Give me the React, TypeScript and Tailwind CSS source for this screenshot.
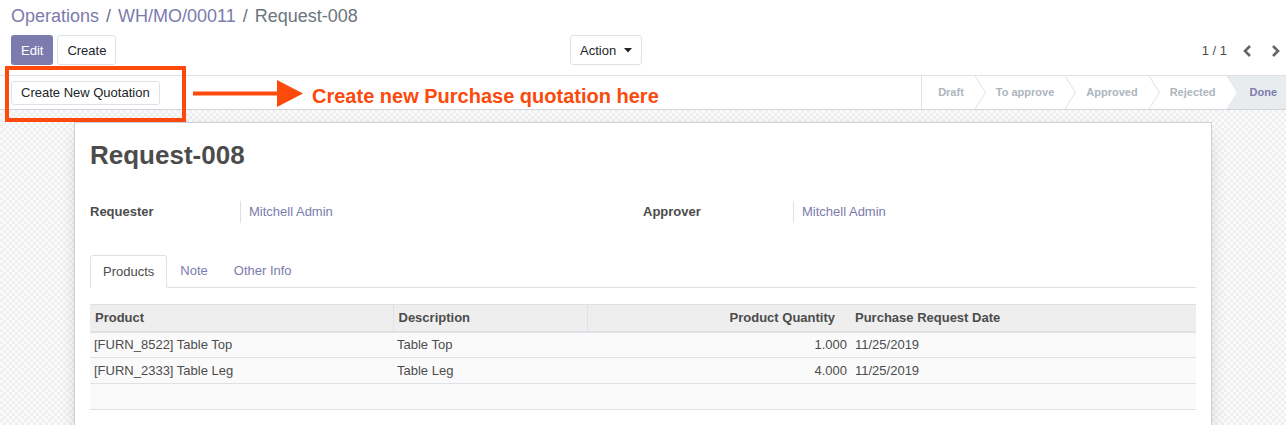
const FONT = { fontFamily: "'Liberation Sans', Arial, sans-serif" };

const stages = ["Draft", "To approve", "Approved", "Rejected"];

function Chevron() {
  return (
    <svg width="11" height="33" viewBox="0 0 11 33" className="shrink-0">
      <polyline points="0,0 10.5,16.5 0,33" fill="none" stroke="#dee2e6" strokeWidth="1" />
    </svg>
  );
}

function StatusBar() {
  return (
    <div className="flex h-[33px] items-stretch border-l border-[#dee2e6] text-[11px] font-bold text-[#adb5bd]">
      {stages.map((s, i) => (
        <div key={s} className="flex items-center">
          <span className={i === 0 ? "pl-[16px] pr-[11px]" : "pl-[10px] pr-[11px]"}>{s}</span>
          <Chevron />
        </div>
      ))}
      <div className="-ml-[11px] flex items-center bg-[#e9ecef] pl-[23px] pr-[9px] text-[#7c7bad] [clip-path:polygon(0_0,100%_0,100%_100%,0_100%,11px_50%)]">
        Done
      </div>
    </div>
  );
}

export default function App() {
  return (
    <div style={FONT} className="relative h-[425px] w-full overflow-hidden bg-white text-[13px] text-[#4c4c4c]">
      {/* control panel */}
      <div className="border-b border-[#dee2e6] px-[11px] pb-[10px]">
        <div className="flex h-[33px] items-center text-[18px]">
          <span className="text-[#7c7bad]">Operations</span>
          <span className="mx-[7px] text-[#6c757d]">/</span>
          <span className="text-[#7c7bad]">WH/MO/00011</span>
          <span className="mx-[7px] text-[#6c757d]">/</span>
          <span className="text-[#6c757d]">Request-008</span>
        </div>
        <div className="mt-[2px] flex h-[30px] items-center">
          <div className="flex w-[559px] gap-[4px]">
            <button className="h-[30px] rounded-[3px] bg-[#7c7bad] px-[10px] pt-px text-white">Edit</button>
            <button className="h-[30px] rounded-[3px] border border-[#dee2e6] bg-white px-[9px] pt-px text-[#212529]">Create</button>
          </div>
          <button className="flex h-[30px] items-center gap-[8px] rounded-[3px] border border-[#dee2e6] bg-white px-[9px] pt-px text-[#212529]">
            Action
            <svg width="8" height="5" viewBox="0 0 8 5"><polygon points="0,0 8,0 4,4.5" fill="#212529" /></svg>
          </button>
          <div className="-mr-[6px] ml-auto flex items-center pt-px">
            <span className="text-[#4c4c4c]">1 / 1</span>
            <svg width="12" height="14" viewBox="0 0 12 14" className="ml-[15px]">
              <polyline points="8,2 3,7 8,12" fill="none" stroke="#666" strokeWidth="2.6" />
            </svg>
            <svg width="12" height="14" viewBox="0 0 12 14" className="ml-[15px]">
              <polyline points="4,2 9,7 4,12" fill="none" stroke="#666" strokeWidth="2.6" />
            </svg>
          </div>
        </div>
      </div>

      {/* status row */}
      <div className="flex items-center justify-between border-b border-[#ced4da] pl-[11px]">
        <button className="h-[24px] rounded-[3px] border border-[#dee2e6] bg-white px-[9px] text-[13px] text-[#212529]">
          Create New Quotation
        </button>
        <StatusBar />
      </div>

      {/* sheet */}
      <div className="h-full bg-[#f7f7f7] bg-[repeating-conic-gradient(#efefef_0_25%,#fbfbfb_0_50%)] bg-[length:6px_6px] pt-[12px]">
        <div className="mx-auto h-[400px] w-[1138px] border border-[#cfcfdc] bg-white px-[15px] shadow-[0_5px_20px_-10px_rgba(0,0,0,0.4)]">
          <h1 className="pt-[14px] text-[26px] font-bold leading-[36px] text-[#4c4c4c]">Request-008</h1>
          <div className="mt-[28px] grid grid-cols-2">
            {[["Requester", "Mitchell Admin"], ["Approver", "Mitchell Admin"]].map(([k, v]) => (
              <div key={k} className="flex h-[22px] items-center">
                <span className="w-[150px] font-bold">{k}</span>
                <span className="border-l border-[#dee2e6] pl-[8px] leading-[22px] text-[#7c7bad]">{v}</span>
              </div>
            ))}
          </div>

          <div className="mt-[32px] flex h-[33px] items-end border-b border-[#dee2e6]">
            <div className="-mb-px flex h-[33px] items-center rounded-t-[3px] border border-[#dee2e6] border-b-white bg-white px-[12px] text-[#4c4c4c]">Products</div>
            <div className="flex h-[33px] items-center px-[13px] text-[#7c7bad]">Note</div>
            <div className="flex h-[33px] items-center px-[13px] text-[#7c7bad]">Other Info</div>
          </div>

          <table className="mt-[16px] w-full border-collapse text-[13px]">
            <thead>
              <tr className="h-[27px] border-t border-b-2 border-[#dee2e6] bg-[#eeeeee] font-bold">
                <th className="w-[303px] border-r border-[#dee2e6] px-[5px] text-left">Product</th>
                <th className="w-[194px] border-r border-[#dee2e6] px-[5px] text-left">Description</th>
                <th className="w-[264px] px-[5px] pr-[16px] text-right">Product Quantity</th>
                <th className="px-[4px] text-left">Purchase Request Date</th>
              </tr>
            </thead>
            <tbody className="bg-[#fafafa]">
              {[
                ["[FURN_8522] Table Top", "Table Top", "1.000", "11/25/2019"],
                ["[FURN_2333] Table Leg", "Table Leg", "4.000", "11/25/2019"],
              ].map((r) => (
                <tr key={r[0]} className="h-[26px] border-b border-[#dee2e6]">
                  <td className="px-[4px]">{r[0]}</td>
                  <td className="px-[4px]">{r[1]}</td>
                  <td className="px-[4px] text-right">{r[2]}</td>
                  <td className="px-[4px]">{r[3]}</td>
                </tr>
              ))}
              <tr className="h-[26px] border-b border-[#dee2e6]">
                <td colSpan={4}></td>
              </tr>
            </tbody>
          </table>
        </div>
      </div>

      {/* annotation overlay */}
      <div className="pointer-events-none absolute left-[5px] top-[66px] h-[56px] w-[181px] border-[4px] border-[#fc4a0d]" />
      <svg className="pointer-events-none absolute left-[193px] top-[80px]" width="111" height="27" viewBox="0 0 111 27">
        <rect x="0" y="11.5" width="86" height="4" fill="#fc4a0d" />
        <polygon points="84,0 110,13.5 84,27" fill="#fc4a0d" />
      </svg>
      <div className="pointer-events-none absolute left-[312px] top-[83px] text-[20px] font-bold leading-[26px] text-[#fc4a0d]">
        Create new Purchase quotation here
      </div>
    </div>
  );
}
